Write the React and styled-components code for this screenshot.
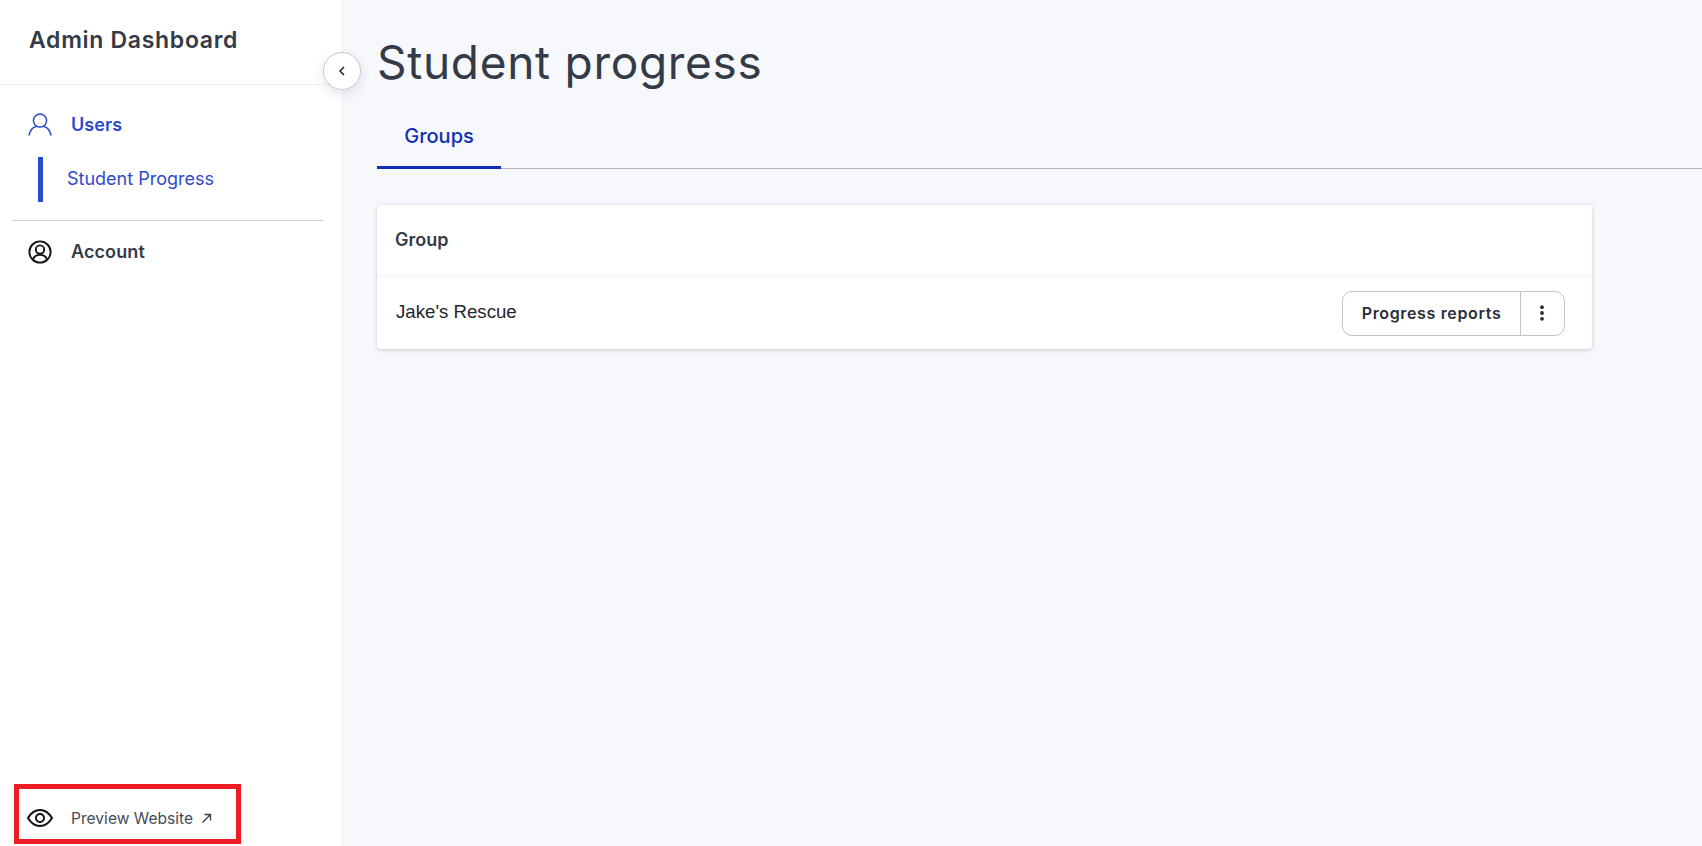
import React from 'react'
import styled, {createGlobalStyle} from 'styled-components'

const display = "'Inter', 'Open Sans', sans-serif"
const blue = '#2c4bcb'
const ink = '#343b48'

const GlobalStyle = createGlobalStyle`
  html, body {
    margin: 0;
    height: 100%;
    background: #f7f8fc;
  }
  #root {
    height: 100%;
  }
  * {
    box-sizing: border-box;
  }
  body {
    font-family: 'Inter', sans-serif;
    color: ${ink};
  }
`

const Layout = styled.div`
  display: flex;
  height: 846px;
  overflow: hidden;
`

const Sidebar = styled.aside`
  position: relative;
  flex: 0 0 341px;
  display: flex;
  flex-direction: column;
  background: #fff;
`

const Brand = styled.div`
  height: 85px;
  padding: 25px 0 0 29px;
  border-bottom: 1px solid #f1f1f3;
  font-family: ${display};
  font-size: 23px;
  line-height: 30px;
  font-weight: 600;
  letter-spacing: 0.7px;
  color: ${ink};
`

const CollapseButton = styled.button`
  position: absolute;
  top: 52px;
  left: 323px;
  width: 38px;
  height: 38px;
  padding: 0;
  display: flex;
  align-items: center;
  justify-content: center;
  border: 1px solid #c9c9d2;
  border-radius: 50%;
  background: #fff;
  box-shadow: 0 4px 12px rgba(40, 40, 70, 0.12);
  z-index: 2;
`

const Nav = styled.nav`
  flex: 1;
  padding: 24px 18px 0 12px;
`

const NavItem = styled.div`
  display: flex;
  align-items: center;
  gap: 19px;
  height: 30px;
  padding-left: 16px;
  font-size: 18px;
  font-weight: 600;
  letter-spacing: 0.1px;
  color: ${props => props.$active ? blue : ink};
`

const NavLabel = styled.span`
  margin-bottom: ${props => props.$lift ? '1px' : '0'};
`

const SubItem = styled.div`
  display: flex;
  align-items: center;
  height: 45px;
  margin: 18px 0 0 26px;
  padding: 0 0 2px 24px;
  border-left: 5px solid ${blue};
  font-size: 18px;
  color: ${blue};
`

const NavDivider = styled.hr`
  height: 1px;
  margin: 18px 0 16px;
  border: 0;
  background: #d3d3d6;
`

const PreviewBox = styled.div`
  display: flex;
  align-items: center;
  gap: 18px;
  width: 227px;
  height: 60px;
  margin: 0 0 2px 14px;
  padding: 8px 0 0 8px;
  border: 5px solid #ee1c25;
  font-size: 15.6px;
  color: #454b59;
`

const Main = styled.main`
  flex: 1;
  min-width: 0;
  padding: 34px 0 0 36px;
`

const Title = styled.h1`
  margin: 0;
  height: 58px;
  font-family: ${display};
  font-size: 46px;
  line-height: 56px;
  font-weight: 400;
  letter-spacing: 0.7px;
  color: ${ink};
`

const Tabs = styled.div`
  display: flex;
  height: 77px;
  border-bottom: 1px solid #b5b5bb;
`

const Tab = styled.div`
  width: 124px;
  height: 77px;
  padding-top: 31px;
  text-align: center;
  border-bottom: 3px solid #0f2fb5;
  font-size: 20px;
  line-height: 26px;
  font-weight: 500;
  color: #0f2fb5;
`

const Card = styled.section`
  width: 1215px;
  margin-top: 36px;
  background: #fff;
  border-radius: 4px;
  box-shadow: 0 1px 4px rgba(30, 30, 50, 0.2);
`

const HeadRow = styled.div`
  display: flex;
  align-items: center;
  height: 72px;
  padding: 0 18px 2px;
  border-bottom: 1px solid #f2f2f4;
  font-size: 18px;
  font-weight: 600;
  color: ${ink};
`

const BodyRow = styled.div`
  display: flex;
  align-items: center;
  justify-content: space-between;
  height: 72px;
  padding: 0 27px 0 19px;
  font-family: 'Liberation Sans', Arial, sans-serif;
  font-size: 18.67px;
  color: #23262d;
`

const GroupName = styled.span`
  margin-bottom: 2px;
`

const SplitButton = styled.div`
  display: flex;
  width: 223px;
  height: 45px;
  border: 1px solid #c4c4c8;
  border-radius: 10px;
`

const ReportButton = styled.div`
  flex: 1;
  display: flex;
  align-items: center;
  justify-content: center;
  border-right: 1px solid #c4c4c8;
  font-family: ${display};
  font-size: 16px;
  font-weight: 600;
  letter-spacing: 0.65px;
  color: #2a2e38;
`

const MoreButton = styled.div`
  flex: 0 0 43px;
  display: flex;
  align-items: center;
  justify-content: center;
  padding-right: 1px;
  color: #2a2e38;
`

const UserIcon = () => (
  <svg width="24" height="24" viewBox="0 0 24 24" fill="none" stroke={blue} strokeWidth="1.5">
    <circle cx="12" cy="8.6" r="6.6" />
    <path d="M1 23c1.2-4.6 4-8 7.2-8.6M23 23c-1.2-4.6-4-8-7.2-8.6" strokeLinecap="round" />
  </svg>
)

const AccountIcon = () => (
  <svg width="24" height="24" viewBox="0 0 24 24" fill="none" stroke="#111" strokeWidth="1.9">
    <circle cx="12" cy="12" r="10.6" />
    <circle cx="12" cy="9.6" r="4.2" />
    <path d="M5 19.5c1-3 3.6-4.6 7-4.6s6 1.6 7 4.6" />
  </svg>
)

const EyeIcon = () => (
  <svg width="26" height="18" viewBox="0 0 26 18" fill="none" stroke="#111" strokeWidth="2">
    <path d="M1 9c3-5 7-8 12-8s9 3 12 8c-3 5-7 8-12 8S4 14 1 9z" />
    <circle cx="13" cy="9" r="4" />
  </svg>
)

const ArrowIcon = () => (
  <svg width="11" height="11" viewBox="0 0 11 11" fill="none" stroke="#343b48" strokeWidth="1.3" style={{marginLeft: 8}}>
    <path d="M1.5 9.5L9.5 1.5M3.5 1.5h6v6" />
  </svg>
)

const Chevron = () => (
  <svg width="8" height="12" viewBox="0 0 8 12" fill="none" stroke="#222" strokeWidth="1.5">
    <path d="M6 2L2 6l4 4" />
  </svg>
)

const Dots = () => (
  <svg width="4" height="16" viewBox="0 0 4 16" fill="#2a2e38">
    <circle cx="2" cy="2.2" r="1.9" />
    <circle cx="2" cy="8" r="1.9" />
    <circle cx="2" cy="13.8" r="1.9" />
  </svg>
)

export default function App() {
  return (
    <Layout>
      <GlobalStyle />
      <Sidebar>
        <Brand>Admin Dashboard</Brand>
        <CollapseButton aria-label="Collapse"><Chevron /></CollapseButton>
        <Nav>
          <NavItem $active><UserIcon /><NavLabel>Users</NavLabel></NavItem>
          <SubItem>Student Progress</SubItem>
          <NavDivider />
          <NavItem><AccountIcon /><NavLabel $lift>Account</NavLabel></NavItem>
        </Nav>
        <PreviewBox>
          <EyeIcon />
          <span>Preview Website<ArrowIcon /></span>
        </PreviewBox>
      </Sidebar>
      <Main>
        <Title>Student progress</Title>
        <Tabs><Tab>Groups</Tab></Tabs>
        <Card>
          <HeadRow>Group</HeadRow>
          <BodyRow>
            <GroupName>Jake's Rescue</GroupName>
            <SplitButton>
              <ReportButton>Progress reports</ReportButton>
              <MoreButton><Dots /></MoreButton>
            </SplitButton>
          </BodyRow>
        </Card>
      </Main>
    </Layout>
  )
}
